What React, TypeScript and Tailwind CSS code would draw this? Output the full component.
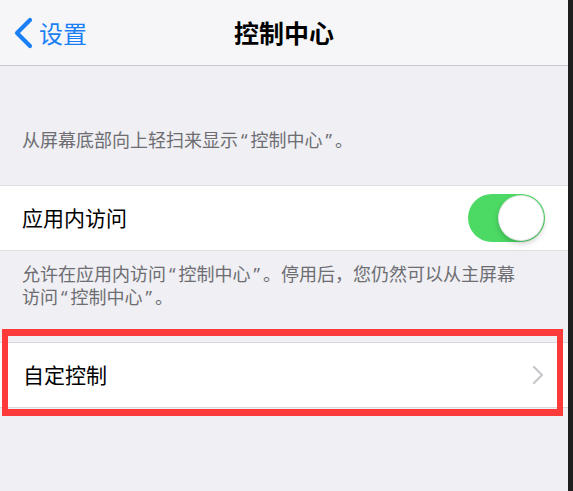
import React from "react";

const font = { fontFamily: '"Noto Sans CJK SC", "Noto Sans", sans-serif' };

// iOS draws curly quotes narrower than the CJK full-width cell
function Q({ children }: { children: string }) {
  return <span className="mx-[3px] font-['Noto_Sans'] leading-none">{children}</span>;
}

function Toggle() {
  return (
    <div className="flex h-[48px] w-[77px] items-center justify-end rounded-full bg-[#4cd964] p-[2px]">
      <div className="h-[44px] w-[44px] rounded-full bg-white shadow-[0_3px_6px_rgba(0,0,0,0.25)] ring-1 ring-[#e4e4e4]" />
    </div>
  );
}

export default function App() {
  return (
    <div lang="zh-CN" className="flex h-[491px] w-[573px] overflow-hidden" style={font}>
      <div className="relative w-[568px] bg-[#efeff4]">
        {/* Nav bar */}
        <div className="relative flex h-[66px] items-center border-b border-[#c8c7cc] bg-[#f6f6f8]">
          <div className="flex items-center gap-[6px] pl-[13px] text-[#1a7ff5]">
            <svg width="20" height="32" viewBox="0 0 20 32" fill="none">
              <path d="M17 3 L4 16 L17 29" stroke="currentColor" strokeWidth="4.2" strokeLinecap="round" strokeLinejoin="round" />
            </svg>
            <span className="text-[24px] leading-none">设置</span>
          </div>
          <div className="absolute inset-x-0 text-center text-[25px] font-semibold leading-none text-black">
            控制中心
          </div>
        </div>

        <p className="px-[22px] pt-[62px] pb-[34px] text-[18px] leading-[23px] text-[#6d6d72]">
          从屏幕底部向上轻扫来显示<Q>“</Q>控制中心<Q>”</Q>。
        </p>

        {/* In-app access row */}
        <div className="flex h-[66px] items-center justify-between border-y border-[#dedee3] bg-white pl-[22px] pr-[23px]">
          <span className="text-[21px] text-black">应用内访问</span>
          <Toggle />
        </div>

        <p className="px-[22px] pt-[11px] pb-[34px] text-[18px] leading-[23px] text-[#6d6d72]">
          允许在应用内访问<Q>“</Q>控制中心<Q>”</Q>。停用后，您仍然可以从主屏幕
          <br />
          访问<Q>“</Q>控制中心<Q>”</Q>。
        </p>

        {/* Customize row */}
        <div className="flex h-[66px] items-center justify-between border-y border-[#d8d8dd] bg-white pl-[23px] pr-[24px]">
          <span className="text-[21px] text-black">自定控制</span>
          <svg width="12" height="20" viewBox="0 0 12 20" fill="none">
            <path d="M2 2 L10 10 L2 18" stroke="#c7c7cc" strokeWidth="2.2" strokeLinecap="round" strokeLinejoin="round" />
          </svg>
        </div>

        {/* Red annotation box */}
        <div className="absolute left-[2px] top-[329px] h-[87px] w-[561px] border-x-[6px] border-y-[7px] border-[#fd3a3a]" />
      </div>
      <div className="flex-1 bg-[#1e1e1e]" />
    </div>
  );
}
